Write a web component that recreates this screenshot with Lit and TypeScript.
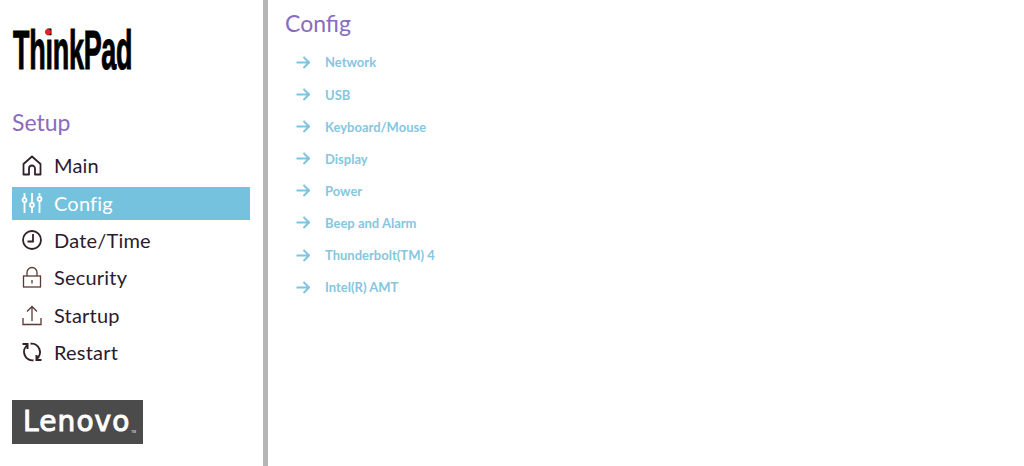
import { LitElement, html, css, svg } from "lit";
import { customElement } from "lit/decorators.js";

const icons: Record<string, unknown> = {
  Main: svg`<path d="M2.500 10 11 2.500 19.500 10v10.500h-5.500v-6a3 3 0 0 0-6 0v6H2.500z" stroke-linejoin="round"/>`,
  Config: svg`<path d="M3.500 1v5M3.500 10v11M11 1v10M11 15v6M18.500 1v4M18.500 9v12"/><circle cx="3.500" cy="8" r="2"/><circle cx="11" cy="13" r="2"/><circle cx="18.500" cy="7" r="2"/>`,
  "Date/Time": svg`<circle cx="11" cy="11" r="9"/><path d="M12 5v7.500H6.500"/>`,
  Security: svg`<rect class="thin" x="2.500" y="10" width="17" height="11"/><path class="thin" d="M6 10V6.500a5 5 0 0 1 10 0V10M11 14v3.500"/>`,
  Startup: svg`<path class="thin" d="M2 14v6.500h18V14M11 17V2.500M6 7.500l5-5 5 5"/>`,
  Restart: svg`<path class="bold" d="M9.500 2.700A8.500 8.500 0 0 1 15.500 18M12.500 19.300A8.500 8.500 0 0 1 6.500 4M1.500 3H6.500V8M20.500 19H15.500V14"/>`,
};

const navItems = ["Main", "Config", "Date/Time", "Security", "Startup", "Restart"];
const subItems = ["Network", "USB", "Keyboard/Mouse", "Display", "Power", "Beep and Alarm", "Thunderbolt(TM) 4", "Intel(R) AMT"];

@customElement("app-root")
export class AppRoot extends LitElement {
  static styles = css`
    :host { display: block; width: 1024px; height: 466px; overflow: hidden; background: #fff; font-family: Lato, "Open Sans", sans-serif; }
    .page { display: flex; height: 466px; }
    .side { box-sizing: border-box; padding: 25px 13px 0 12px; border-right: 5px solid #b5b5b5; width: 268px; display: flex; flex-direction: column; }
    .thinkpad { position: relative; height: 50px; display: flex; align-items: center; margin-left: 1px; }
    .tp-text { font: 700 55px/50px "Liberation Sans", sans-serif; color: #000; transform: scaleX(.49); transform-origin: left center; white-space: nowrap; letter-spacing: -.5px; -webkit-text-stroke: 1.1px #000; }
    .dot { position: absolute; left: 32px; top: 4px; width: 6px; height: 6px; border-radius: 50%; background: #e2231a; }
    .setup { margin: 32px 0 0; font-size: 23px; line-height: 30px; font-weight: 400; color: #8a6bbd; }
    nav { display: flex; flex-direction: column; margin-top: 12.3px; width: 238px; gap: 4.4px; }
    .item { box-sizing: border-box; height: 33px; padding-bottom: 1px; display: flex; align-items: center; gap: 11px; padding-left: 9px; font-size: 20px; color: #2c1a2e; letter-spacing: .2px; }
    .item svg { width: 22px; height: 22px; fill: none; stroke: #33202c; stroke-width: 1.8; flex: none; }
    .item svg .thin { stroke: #5a3a34; stroke-width: 1.3; }
    .item svg .bold { stroke-width: 2; }
    .item.on { background: #74c2dd; color: #fff; }
    .item.on svg { stroke: #fff; }
    .lenovo { margin-top: 30.7px; width: 131px; height: 44px; background: #4b4b4b; color: #fff; position: relative; display: flex; align-items: center; padding-left: 11px; box-sizing: border-box; font: 400 28px/44px "DejaVu Sans", sans-serif; letter-spacing: 1.1px; -webkit-text-stroke: 1px #fff; }
    .tm { position: absolute; right: 7px; bottom: 10px; font: 400 3px/4px Inter, sans-serif; letter-spacing: 0; -webkit-text-stroke: 0; }
    main { flex: 1; padding: 8px 0 0 17px; }
    h1 { margin: 0; font-size: 23px; line-height: 30px; font-weight: 400; color: #8a6bbd; }
    ul { list-style: none; margin: 8.4px 0 0; padding: 0 0 0 11px; display: flex; flex-direction: column; }
    li { height: 32.1px; display: flex; align-items: center; gap: 15px; font-size: 13px; font-weight: 700; color: #86c6e0; }
    li svg { width: 14px; height: 13px; fill: none; stroke: #7fc3de; stroke-width: 2; flex: none; }
  `;

  render() {
    return html`<div class="page">
      <aside class="side">
        <div class="thinkpad"><span class="tp-text">ThinkPad</span><span class="dot"></span></div>
        <h2 class="setup">Setup</h2>
        <nav>
          ${navItems.map((n) => html`<div class="item ${n === "Config" ? "on" : ""}"><svg viewBox="0 0 22 22">${icons[n]}</svg><span>${n}</span></div>`)}
        </nav>
        <div class="lenovo">Lenovo<span class="tm">TM</span></div>
      </aside>
      <main>
        <h1>Config</h1>
        <ul>
          ${subItems.map((s) => html`<li><svg viewBox="0 0 14 13"><path d="M0.500 6.500h12.500M7.500 1l5.500 5.500-5.500 5.500"/></svg><span>${s}</span></li>`)}
        </ul>
      </main>
    </div>`;
  }
}
